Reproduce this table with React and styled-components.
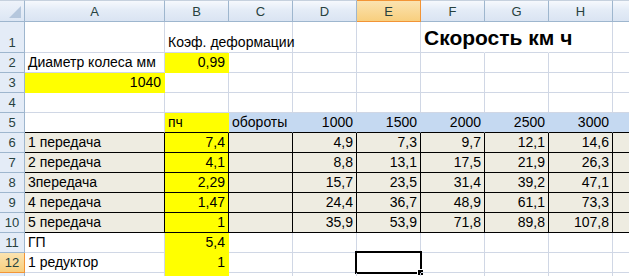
import React from "react";
import styled, { createGlobalStyle, css } from "styled-components";

const GlobalStyle = createGlobalStyle`
  html, body { margin: 0; padding: 0; background: #ffffff; }
  body { font-family: "Liberation Sans", Arial, sans-serif; overflow: hidden; }
`;

const GRID = "#d0d7e5";
const HEAD_LINE = "#9eb6ce";
const INK = "#000000";

const Sheet = styled.div`
  display: grid;
  grid-template-columns: 25px 140px repeat(8, 64px);
  grid-template-rows: 22px 31px repeat(13, 20px);
  width: 629px;
  height: 276px;
  overflow: hidden;
  background: #ffffff;
  font-size: 14px;
  color: #000;
`;

const Corner = styled.div`
  box-sizing: border-box;
  border-top: 1px solid #c6d1de;
  border-right: 1px solid ${HEAD_LINE};
  border-bottom: 1px solid ${HEAD_LINE};
  background: linear-gradient(#eef3fa, #dce6f4);
  position: relative;
  &::after {
    content: "";
    position: absolute;
    right: 3px;
    bottom: 3px;
    border-style: solid;
    border-width: 0 0 12px 12px;
    border-color: transparent transparent #b5c7dd transparent;
  }
`;

const activeHead = css`
  background: linear-gradient(#fbe3b0, #f8cf7e);
  border-color: #f29436;
`;

const ColHead = styled.div`
  box-sizing: border-box;
  display: flex;
  align-items: center;
  justify-content: center;
  border-top: 1px solid #c6d1de;
  border-right: 1px solid ${HEAD_LINE};
  border-bottom: 1px solid ${HEAD_LINE};
  background: linear-gradient(#f6f9fd 0%, #e4ecf7 45%, #dae4f2 100%);
  color: #27413e;
  font-size: 13px;
  ${(p) => p.$active && activeHead}
`;

const RowHead = styled.div`
  box-sizing: border-box;
  display: flex;
  align-items: flex-end;
  justify-content: center;
  padding-bottom: 2px;
  border-right: 1px solid ${HEAD_LINE};
  border-bottom: 1px solid ${HEAD_LINE};
  background: #e4ecf7;
  color: #27413e;
  font-size: 13px;
  ${(p) => p.$active && activeHead}
`;

const Cell = styled.div`
  box-sizing: border-box;
  position: relative;
  display: flex;
  align-items: flex-end;
  justify-content: ${(p) => (p.$right ? "flex-end" : "flex-start")};
  padding: 0 3px 2px 3px;
  white-space: nowrap;
  overflow: visible;
  background: ${(p) => p.$bg || "transparent"};
  border-right: 1px solid
    ${(p) => (p.$openRight ? "transparent" : p.$inkRight ? INK : p.$bg && p.$bg !== "#ffffff" ? "transparent" : GRID)};
  border-bottom: 1px solid
    ${(p) => (p.$inkBottom ? INK : p.$bg && p.$bg !== "#ffffff" ? "transparent" : GRID)};
  font-size: ${(p) => (p.$title ? "21px" : "14px")};
  font-weight: ${(p) => (p.$title ? 700 : 400)};
  z-index: ${(p) => (p.$title || p.$spill ? 1 : 0)};
  ${(p) =>
    p.$selected &&
    css`
      &::after {
        content: "";
        position: absolute;
        left: -2px;
        top: -2px;
        right: -2px;
        bottom: -2px;
        border: 2px solid #000;
        pointer-events: none;
      }
      &::before {
        content: "";
        position: absolute;
        right: -4px;
        bottom: -4px;
        width: 5px;
        height: 5px;
        background: #000;
        border: 1px solid #fff;
        z-index: 2;
      }
    `}
`;

const YELLOW = "#ffff00";
const BEIGE = "#eeece1";
const BLUE = "#c5d9f1";

// the last column is only partly in view, so its letter is not shown
const columns = ["A", "B", "C", "D", "E", "F", "G", "H", ""];

const gears = [
  ["1 передача", "7,4", "4,9", "7,3", "9,7", "12,1", "14,6"],
  ["2 передача", "4,1", "8,8", "13,1", "17,5", "21,9", "26,3"],
  ["3передача", "2,29", "15,7", "23,5", "31,4", "39,2", "47,1"],
  ["4 передача", "1,47", "24,4", "36,7", "48,9", "61,1", "73,3"],
  ["5 передача", "1", "35,9", "53,9", "71,8", "89,8", "107,8"],
];

function blankRow() {
  return Array.from({ length: 9 }, () => ({}));
}

function buildRows() {
  const rows = [];
  // 1
  const r1 = blankRow();
  r1[1] = { text: "Коэф. деформации", spill: true, openRight: true };
  r1[5] = { text: "Скорость км ч", title: true, openRight: true };
  r1[6] = { openRight: true };
  rows.push(r1);
  // 2
  const r2 = blankRow();
  r2[0] = { text: "Диаметр колеса мм" };
  r2[1] = { text: "0,99", right: true, bg: YELLOW };
  rows.push(r2);
  // 3
  const r3 = blankRow();
  r3[0] = { text: "1040", right: true, bg: YELLOW };
  rows.push(r3);
  // 4
  rows.push(blankRow());
  // 5
  const speeds = ["1000", "1500", "2000", "2500", "3000"];
  const r5 = [
    { inkBottom: true },
    { text: "пч", bg: YELLOW, inkBottom: true },
    { text: "обороты", bg: BLUE, inkBottom: true },
    ...speeds.map((s) => ({ text: s, right: true, bg: BLUE, inkBottom: true })),
    { bg: BLUE, inkBottom: true },
  ];
  rows.push(r5);
  // 6-10
  gears.forEach(([name, ratio, ...vals]) => {
    const edge = { inkBottom: true, inkRight: true };
    rows.push([
      { text: name, bg: BEIGE, ...edge },
      { text: ratio, right: true, bg: YELLOW, ...edge },
      { bg: BEIGE, ...edge },
      ...vals.map((v) => ({ text: v, right: true, bg: BEIGE, ...edge })),
      { bg: BEIGE, inkBottom: true },
    ]);
  });
  // 11
  const r11 = blankRow();
  r11[0] = { text: "ГП" };
  r11[1] = { text: "5,4", right: true, bg: YELLOW };
  rows.push(r11);
  // 12
  const r12 = blankRow();
  r12[0] = { text: "1 редуктор" };
  r12[1] = { text: "1", right: true, bg: YELLOW };
  r12[4] = { selected: true };
  rows.push(r12);
  // 13
  const r13 = blankRow();
  r13[1] = { bg: YELLOW };
  rows.push(r13);
  return rows;
}

const rows = buildRows();

export default function App() {
  return (
    <>
      <GlobalStyle />
      <Sheet>
        <Corner />
        {columns.map((c, i) => (
          <ColHead key={i} $active={c === "E"}>
            {c}
          </ColHead>
        ))}
        {rows.map((row, i) => (
          <React.Fragment key={i}>
            <RowHead $active={i === 11}>{i < 12 ? i + 1 : ""}</RowHead>
            {row.map((cell, j) => (
              <Cell
                key={j}
                $bg={cell.bg}
                $right={cell.right}
                $title={cell.title}
                $spill={cell.spill}
                $openRight={cell.openRight}
                $inkRight={cell.inkRight}
                $inkBottom={cell.inkBottom}
                $selected={cell.selected}
              >
                {cell.text}
              </Cell>
            ))}
          </React.Fragment>
        ))}
      </Sheet>
    </>
  );
}
